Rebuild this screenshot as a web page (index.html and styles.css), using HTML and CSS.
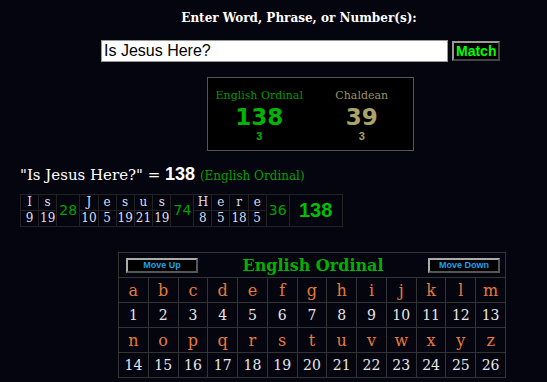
FILE: index.html
```html
<!DOCTYPE html>
<html lang="en">
<head>
    <meta charset="UTF-8">
    <meta name="viewport" content="width=device-width, initial-scale=1.0">
    <title>Gematria</title>
    <link rel="stylesheet" href="styles.css">
</head>
<body>
    <div class="search">
        <h1 class="search-title">Enter Word, Phrase, or Number(s):</h1>
        <form class="search-row">
            <input type="text" class="search-input" value="Is Jesus Here?">
            <button type="button" class="match-btn">Match</button>
        </form>
    </div>

    <div class="result-box">
        <div class="result-col ordinal">
            <div class="result-name">English Ordinal</div>
            <div class="result-value">138</div>
            <div class="result-reduced">3</div>
        </div>
        <div class="result-col chaldean">
            <div class="result-name">Chaldean</div>
            <div class="result-value">39</div>
            <div class="result-reduced">3</div>
        </div>
    </div>

    <p class="summary">"Is Jesus Here?" = <b>138</b> <span class="summary-cipher">(English Ordinal)</span></p>

    <table class="breakdown">
        <tr>
            <td>I</td><td>s</td><td class="word-sum" rowspan="2">28</td>
            <td>J</td><td>e</td><td>s</td><td>u</td><td>s</td><td class="word-sum" rowspan="2">74</td>
            <td>H</td><td>e</td><td>r</td><td>e</td><td class="word-sum" rowspan="2">36</td>
            <td class="total" rowspan="2">138</td>
        </tr>
        <tr class="values">
            <td>9</td><td>19</td>
            <td>10</td><td>5</td><td>19</td><td>21</td><td>19</td>
            <td>8</td><td>5</td><td>18</td><td>5</td>
        </tr>
    </table>

    <table class="chart">
        <tr>
            <td colspan="13" class="chart-head">
                <div class="chart-head-row">
                    <button type="button" class="move-btn">Move Up</button>
                    <span class="chart-title">English Ordinal</span>
                    <button type="button" class="move-btn">Move Down</button>
                </div>
            </td>
        </tr>
        <tr class="letters">
            <td>a</td><td>b</td><td>c</td><td>d</td><td>e</td><td>f</td><td>g</td><td>h</td><td>i</td><td>j</td><td>k</td><td>l</td><td>m</td>
        </tr>
        <tr class="numbers">
            <td>1</td><td>2</td><td>3</td><td>4</td><td>5</td><td>6</td><td>7</td><td>8</td><td>9</td><td>10</td><td>11</td><td>12</td><td>13</td>
        </tr>
        <tr class="letters">
            <td>n</td><td>o</td><td>p</td><td>q</td><td>r</td><td>s</td><td>t</td><td>u</td><td>v</td><td>w</td><td>x</td><td>y</td><td>z</td>
        </tr>
        <tr class="numbers">
            <td>14</td><td>15</td><td>16</td><td>17</td><td>18</td><td>19</td><td>20</td><td>21</td><td>22</td><td>23</td><td>24</td><td>25</td><td>26</td>
        </tr>
    </table>
</body>
</html>
```

FILE: styles.css
```css
body {
    margin: 0;
    padding: 0;
    background-color: #05050f; /* near black navy */
    color: #fff;
    font-family: "DejaVu Serif", serif;
}

.search {
    margin-left: 101px;
    width: 396px;
    padding-top: 10px;
}

.search-title {
    margin: 0;
    text-align: center;
    font-size: 12px;
    font-weight: bold;
    line-height: 16px;
}

.search-row {
    display: flex;
    align-items: center;
    gap: 4px;
    margin-top: 14px;
}

.search-input {
    flex-shrink: 0;
    width: 347px;
    height: 22px;
    box-sizing: border-box;
    margin: 0;
    padding: 0 2px;
    border: 1px solid #999;
    background-color: #fff;
    color: #000;
    font-family: "Liberation Sans", Arial, sans-serif;
    font-size: 16px;
}

.match-btn {
    flex-shrink: 0;
    height: 20px;
    padding: 0 2px;
    background-color: #000;
    border: 2px outset #999;
    color: #00ff00;
    font-family: "Liberation Sans", Arial, sans-serif;
    font-weight: bold;
    font-size: 14px;
    line-height: 14px;
}

.result-box {
    display: flex;
    width: 207px;
    height: 74px;
    box-sizing: border-box;
    margin: 15px 0 0 207px;
    padding-top: 10px;
    border: 1px solid #555;
    background-color: #000;
}

.result-col {
    flex: 1;
    text-align: center;
}

.result-name {
    font-size: 11px;
    line-height: 16px;
}

.result-value {
    font-family: "DejaVu Sans", sans-serif;
    font-weight: bold;
    font-size: 23px;
    line-height: 26px;
}

.result-reduced {
    font-family: "Liberation Sans", Arial, sans-serif;
    font-weight: bold;
    font-size: 11px;
    line-height: 12px;
}

.ordinal { color: #00b400; }
.ordinal .result-name { color: #009900; }
.chaldean { color: #aaa36a; }
.chaldean .result-name { color: #99935f; }

.summary {
    margin: 13px 0 0 20px;
    font-size: 15px;
    line-height: 20px;
}

.summary b {
    font-family: "Liberation Sans", Arial, sans-serif;
    font-size: 18px;
}

.summary-cipher {
    color: #00a000;
    font-size: 12px;
}

.breakdown {
    margin: 8px 0 0 20px;
    border-collapse: collapse;
}

.breakdown td {
    border: 1px solid #222;
    width: 15px;
    padding: 0 1px;
    text-align: center;
    font-size: 12px;
    line-height: 15px;
    color: #dde;
}

.breakdown .word-sum {
    width: 20px;
    color: #00a000;
    font-family: "DejaVu Sans", sans-serif;
    font-size: 14px;
}

.breakdown .total {
    width: 48px;
    color: #00c000;
    font-family: "Liberation Sans", Arial, sans-serif;
    font-weight: bold;
    font-size: 20px;
    padding: 0 2px;
}

.chart {
    margin: 25px 0 0 118px;
    width: 388px;
    border-collapse: collapse;
    table-layout: fixed;
}

.chart td {
    border: 1px solid #333;
    text-align: center;
    height: 24px;
    padding: 0;
}

.chart-head-row {
    display: flex;
    align-items: center;
    justify-content: space-between;
    padding: 0 5px 0 7px;
}

.chart-title {
    color: #00b000;
    font-weight: bold;
    font-size: 16px;
}

.move-btn {
    width: 72px;
    height: 15px;
    padding: 0;
    background-color: #000;
    border: 2px outset #aaa;
    color: #1aa3e8;
    font-family: "Liberation Sans", Arial, sans-serif;
    font-size: 9px;
    font-weight: bold;
}

.letters td {
    color: #e57a3c;
    font-size: 16px;
}

.numbers td {
    color: #e8e8e8;
    font-size: 14px;
}
```
